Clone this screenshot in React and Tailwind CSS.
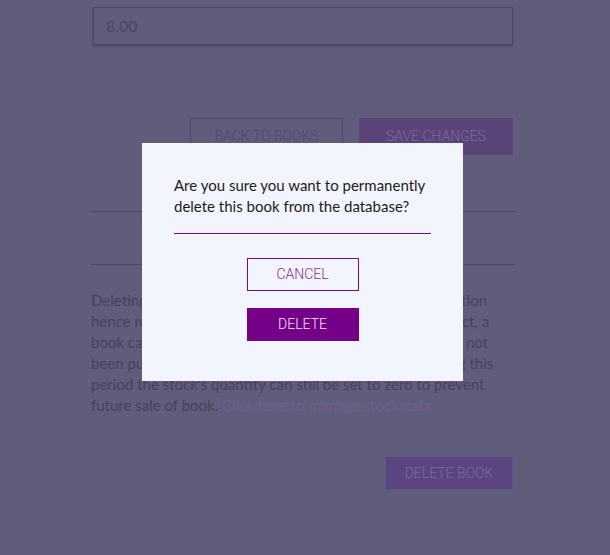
import React from "react";

const body = { fontFamily: "Lato, 'Noto Sans', sans-serif" };
const btn = { fontFamily: "Roboto, 'Noto Sans', sans-serif" };

function ConfirmModal() {
    return (
        <div className="absolute left-[142px] top-[143px] w-[321px] bg-[#f3f5fe] px-8 pt-[32px] pb-10" style={body}>
            <p className="text-[15px] leading-[21px] text-[#1c1c22]">
                Are you sure you want to permanently delete this book from the database?
            </p>
            <div className="mt-[16px] h-px bg-[#7a0a78]" />
            <div className="mt-6 flex flex-col items-center gap-[17px]">
                <button className="h-[33px] w-[112px] border border-[#7a0a78] text-[14px] font-light text-[#8b2a8a]" style={btn}>
                    CANCEL
                </button>
                <button className="h-[33px] w-[112px] bg-[#730086] text-[14px] font-light text-[#f6e6fa]" style={btn}>
                    DELETE
                </button>
            </div>
        </div>
    );
}

export default function App() {
    return (
        <div className="relative h-[555px] w-[610px] overflow-hidden bg-[#605d7b]" style={body}>
            <div className="ml-[91px] w-[424px] pt-[7px]">
                <div className="mx-[2px] flex h-[38px] items-center border border-[#4e496b] px-3 text-[16px] text-[#4a4566] shadow-[0_1px_2px_rgba(40,30,60,0.4)]">
                    8.00
                </div>
                <div className="mt-[73px] flex justify-end gap-4 pr-[2px]">
                    <button className="h-[37px] w-[153px] border border-[#4f4670] text-[14px] font-light text-[#4f4870]" style={btn}>
                        BACK TO BOOKS
                    </button>
                    <button className="h-[37px] w-[154px] bg-[#5a4378] text-[14px] font-light text-[#7a6c98]" style={btn}>
                        SAVE CHANGES
                    </button>
                </div>
                <div className="mt-[56px] flex h-[54px] items-center justify-center border-y border-[#52416e] text-[18px] text-[#4a4462]">
                    Delete Book
                </div>
                <p className="mt-[25px] text-[15px] leading-[21px] text-[#47415f]">
                    Deleting a book also removes its stock and sales information<br />
                    hence removing any access to its past sales records. In fact, a<br />
                    book can only be permanently deleted once its stock has not<br />
                    been purchased or sold within the last thirty days. During this<br />
                    period the stock's quantity can still be set to zero to prevent<br />
                    future sale of book. <span className="text-[#6e5d92]">Click here to manage stock data.</span>
                </p>
                <div className="mt-[40px] flex justify-end pr-[2px]">
                    <button className="h-[34px] w-[128px] rounded-[3px] border border-[#4f5c8c] bg-[#5a457e] text-[14px] font-light text-[#7a6c9b]" style={btn}>
                        DELETE BOOK
                    </button>
                </div>
            </div>
            <ConfirmModal />
        </div>
    );
}
